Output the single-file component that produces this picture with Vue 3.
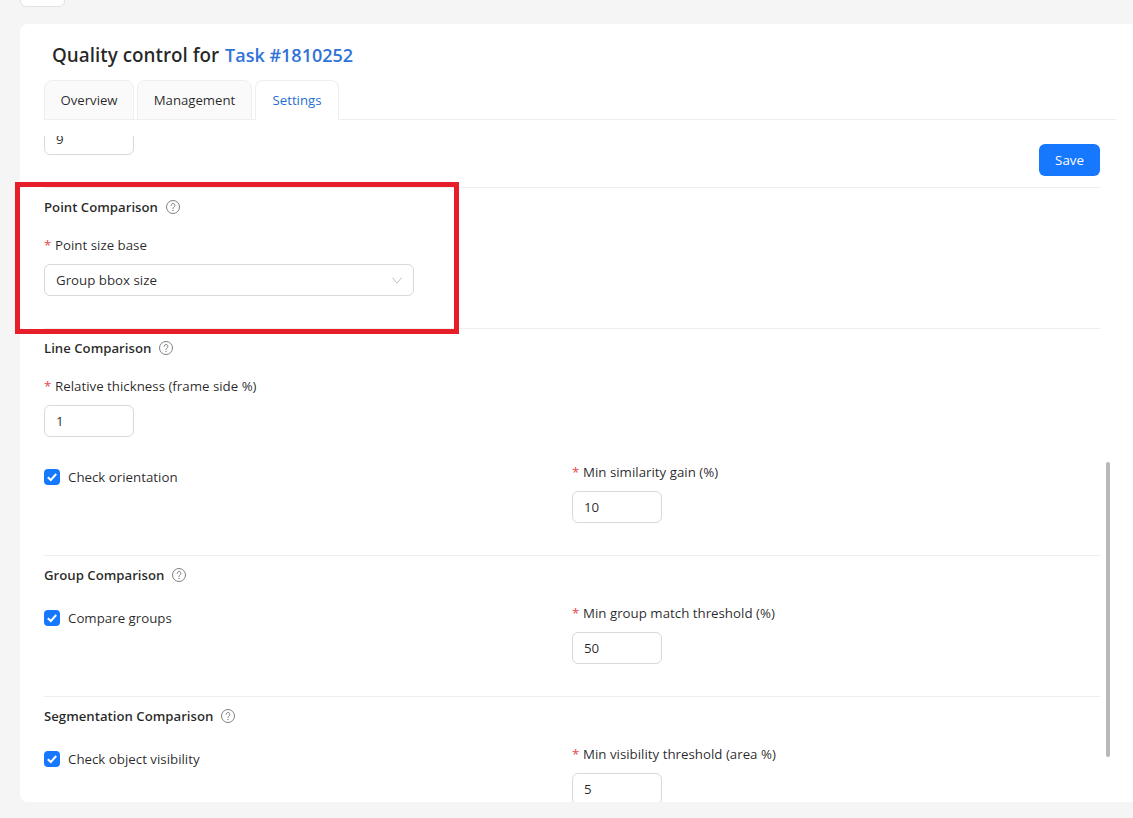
<script setup>
const tabs = [
  { name: 'Overview', active: false },
  { name: 'Management', active: false },
  { name: 'Settings', active: true },
]
const sections = [
  { title: 'Group Comparison', check: 'Compare groups', label: 'Min group match threshold (%)', value: '50' },
  { title: 'Segmentation Comparison', check: 'Check object visibility', label: 'Min visibility threshold (area %)', value: '5' },
]
</script>

<template>
  <div class="page">
    <div class="back"></div>
    <main class="card">
      <h1 class="title">Quality control for <a class="link">Task #1810252</a></h1>
      <nav class="tabs">
        <div v-for="t in tabs" :key="t.name" class="tab" :class="{ active: t.active }">{{ t.name }}</div>
      </nav>
      <div class="scroll">
        <div class="content">
          <div class="top-row">
            <div class="input">9</div>
            <button class="save">Save</button>
          </div>

          <section class="section point">
            <h2 class="head">Point Comparison
              <svg class="help" viewBox="0 0 14 14" fill="none" stroke="#808080"><circle cx="7" cy="7" r="6.5" /><path d="M5.1 5.4a1.9 1.9 0 1 1 2.9 1.6c-.7.45-1 .8-1 1.6" stroke-linecap="round" /><circle cx="7" cy="10.5" r=".45" fill="#808080" stroke-width=".5" /></svg>
            </h2>
            <label class="label"><i>*</i>Point size base</label>
            <div class="select">
              <span>Group bbox size</span>
              <svg class="chev" viewBox="0 0 10 7" fill="none" stroke="#bfbfbf"><path d="M.5.7 5 6.2 9.5.7" /></svg>
            </div>
          </section>

          <section class="section">
            <h2 class="head">Line Comparison
              <svg class="help" viewBox="0 0 14 14" fill="none" stroke="#808080"><circle cx="7" cy="7" r="6.5" /><path d="M5.1 5.4a1.9 1.9 0 1 1 2.9 1.6c-.7.45-1 .8-1 1.6" stroke-linecap="round" /><circle cx="7" cy="10.5" r=".45" fill="#808080" stroke-width=".5" /></svg>
            </h2>
            <label class="label"><i>*</i>Relative thickness (frame side %)</label>
            <div class="input">1</div>
            <div class="split spaced">
              <div class="check-wrap">
                <span class="box"><svg viewBox="0 0 16 16" fill="none" stroke="#fff" stroke-width="2"><path d="M3.8 8.2 6.8 11l5.4-6" /></svg></span>
                <span>Check orientation</span>
              </div>
              <div>
                <label class="label"><i>*</i>Min similarity gain (%)</label>
                <div class="input">10</div>
              </div>
            </div>
          </section>

          <section v-for="s in sections" :key="s.title" class="section">
            <h2 class="head">{{ s.title }}
              <svg class="help" viewBox="0 0 14 14" fill="none" stroke="#808080"><circle cx="7" cy="7" r="6.5" /><path d="M5.1 5.4a1.9 1.9 0 1 1 2.9 1.6c-.7.45-1 .8-1 1.6" stroke-linecap="round" /><circle cx="7" cy="10.5" r=".45" fill="#808080" stroke-width=".5" /></svg>
            </h2>
            <div class="split">
              <div class="check-wrap">
                <span class="box"><svg viewBox="0 0 16 16" fill="none" stroke="#fff" stroke-width="2"><path d="M3.8 8.2 6.8 11l5.4-6" /></svg></span>
                <span>{{ s.check }}</span>
              </div>
              <div>
                <label class="label"><i>*</i>{{ s.label }}</label>
                <div class="input">{{ s.value }}</div>
              </div>
            </div>
          </section>
        </div>
      </div>
      <div class="thumb"></div>
    </main>
    <div class="highlight"></div>
  </div>
</template>

<style>
html, body { margin: 0; overflow: hidden; background: #f5f5f5; }
</style>

<style scoped>
.page {
  position: relative;
  width: 1133px;
  height: 818px;
  overflow: hidden;
  background: #f5f5f5;
  font-family: "Open Sans", "Noto Sans", sans-serif;
  font-size: 13.3px;
  line-height: 22px;
  color: rgba(0, 0, 0, 0.85);
}
.back {
  width: 45px;
  height: 32px;
  margin: -25px 0 17px 20px;
  box-sizing: border-box;
  background: #fff;
  border: 1px solid #e3e3e3;
  border-radius: 6px;
}
.card {
  position: relative;
  height: 778px;
  margin-left: 20px;
  background: #fff;
  border-radius: 8px 0 0 8px;
  overflow: hidden;
  display: flex;
  flex-direction: column;
}
.title {
  margin: 17px 0 11px 32px;
  font-size: 18.85px;
  line-height: 28px;
  font-weight: 600;
}
.link { color: #2f73d9; font-size: 18px; margin-left: 1px; }
.tabs {
  width: 1072px;
  height: 40px;
  margin-left: 24px;
  box-sizing: border-box;
  display: flex;
  gap: 3px;
  border-bottom: 1px solid #efefef;
}
.tab {
  height: 40px;
  box-sizing: border-box;
  padding: 8px 0;
  text-align: center;
  font-size: 13.2px;
  background: #fafafa;
  border: 1px solid #efefef;
  border-radius: 8px 8px 0 0;
}
.tab:nth-child(1) { width: 90px; }
.tab:nth-child(2) { width: 115px; }
.tab:nth-child(3) { width: 84px; }
.tab.active {
  background: #fff;
  color: #1f6fd0;
  border-bottom-color: #fff;
}
.scroll {
  flex: 1;
  min-height: 0;
  margin-top: 16px;
  overflow: hidden;
}
.content {
  width: 1056px;
  margin: -13px 0 0 24px;
}
.top-row {
  height: 64px;
  display: flex;
  justify-content: space-between;
  align-items: flex-start;
}
.save {
  height: 32px;
  width: 61px;
  margin-top: 21px;
  padding: 0;
  border: 0;
  border-radius: 6px;
  background: #1677ff;
  color: #fff;
  font: inherit;
}
.section {
  border-top: 1px solid #efefef;
  padding: 8px 0 32px;
}
.head {
  display: flex;
  align-items: center;
  gap: 8px;
  margin: 0 0 16px;
  font-size: 13.2px;
  line-height: 22px;
  font-weight: 600;
}
.help { width: 14px; height: 14px; }
.label {
  display: block;
  height: 22px;
  margin-bottom: 8px;
}
.label i {
  display: inline-block;
  width: 11px;
  color: #e5484d;
  font-style: normal;
}
.input {
  width: 90px;
  height: 32px;
  box-sizing: border-box;
  padding: 4px 11px;
  background: #fff;
  border: 1px solid #d9d9d9;
  border-radius: 6px;
}
.select {
  width: 370px;
  height: 32px;
  box-sizing: border-box;
  padding: 4px 11px;
  display: flex;
  justify-content: space-between;
  align-items: center;
  border: 1px solid #d9d9d9;
  border-radius: 6px;
}
.chev { width: 10px; height: 7px; }
.split {
  display: grid;
  grid-template-columns: 1fr 1fr;
}
.spaced { margin-top: 24px; }
.check-wrap {
  height: 32px;
  display: flex;
  align-items: center;
  gap: 8px;
}
.box {
  width: 16px;
  height: 16px;
  border-radius: 4px;
  background: #1677ff;
  display: block;
}
.box svg { display: block; width: 16px; height: 16px; }
.thumb {
  position: absolute;
  left: 1086px;
  top: 438px;
  width: 4px;
  height: 295px;
  border-radius: 2px;
  background: #b8b8b8;
}
.highlight {
  position: absolute;
  left: 15px;
  top: 182px;
  width: 444px;
  height: 152px;
  box-sizing: border-box;
  border: 5px solid #e61e2a;
  pointer-events: none;
}
</style>
